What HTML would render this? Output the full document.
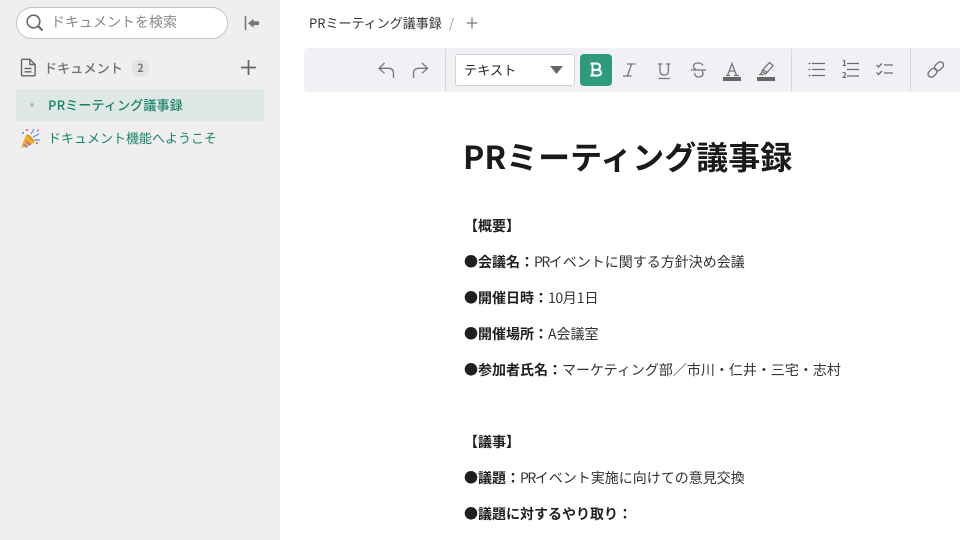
<!DOCTYPE html>
<html lang="ja"><head><meta charset="utf-8"><style>
*{box-sizing:border-box}
html,body{margin:0;padding:0}
body{width:960px;height:540px;overflow:hidden;background:#fff;position:relative;font-family:"Noto Sans CJK JP","Liberation Sans",sans-serif;color:#1f1f1f}
.a{position:absolute;white-space:nowrap}
svg{position:absolute;overflow:visible}
.p{left:464px;font-size:14px;line-height:20px;color:#333}
.p b{font-weight:700;color:#1f1f1f}
.n{letter-spacing:-1.5px}
</style></head><body>
<div class="a" style="left:0;top:0;width:280px;height:540px;background:#efefef;border-left:2px solid #e8f0ec"></div>
<div class="a" style="left:16px;top:7px;width:212px;height:32px;background:#fff;border:1px solid #c4c4c4;border-radius:16px"></div>
<svg style="left:25px;top:13px" width="20" height="20" fill="none" stroke="#666" stroke-width="1.6"><circle cx="8.5" cy="8.5" r="6.3"/><path d="M13 13l4.5 4.5" stroke-width="2"/></svg>
<div class="a" style="left:51px;top:12px;font-size:14px;line-height:20px;color:#8a8a8a">ドキュメントを検索</div>
<svg style="left:244px;top:16px" width="16" height="15"><path d="M1.500 0v14" stroke="#777" stroke-width="1.600"/><path d="M4 7.200l5.500-4.500v2.600H15v3.800H9.500v2.600z" fill="#777"/></svg>
<svg style="left:20px;top:58px" width="18" height="20" fill="none" stroke="#666" stroke-width="1.400"><path d="M1.500 2.200q0-.9.900-.9h7.400l5.300 5.200v10.400q0 .9-.9.900H2.400q-.9 0-.9-.9zM9.800 1.300v5.200h5.300M4.500 10.500h7M4.500 13.800h7"/></svg>
<div class="a" style="left:44px;top:58px;font-size:13px;line-height:20px;font-weight:500;color:#6f6f6f;letter-spacing:.15px">ドキュメント</div>
<div class="a" style="left:132px;top:60px;width:17px;height:17px;border-radius:9px;background:#e3e3e3;color:#777;font-size:11px;font-weight:700;line-height:17px;text-align:center">2</div>
<svg style="left:241px;top:60px" width="15" height="15"><path d="M7.500 0v15M0 7.500h15" stroke="#666" stroke-width="1.700"/></svg>
<div class="a" style="left:16px;top:89px;width:248px;height:32px;background:#dfe8e4;border-radius:3px"></div>
<div class="a" style="left:30px;top:103px;width:4px;height:4px;border-radius:2px;background:#bdbdbd"></div>
<div class="a" style="left:48px;top:95px;font-size:13px;line-height:20px;font-weight:500;color:#16846b;letter-spacing:.15px">PRミーティング議事録</div>
<svg style="left:20px;top:128px" width="21" height="21"><path d="M1 20L6 7l8 8z" fill="#f1b51c"/><path d="M2.800 15.500l5.500 3.200-2.500 1zM4.500 11l6.800 5.800-2.500 1z" fill="#a35bd0"/><path d="M6 7l8 8c1-1-.5-4-2.700-6.200S7 6 6 7z" fill="#e5932b"/><path d="M11 6l3-5M13 9l6-3M14 12l6 0" stroke="#5a8fe0" stroke-width="1.200"/><circle cx="7" cy="2" r="1" fill="#d9534f"/><circle cx="18" cy="2.500" r="1" fill="#d95fa0"/><circle cx="17" cy="15" r="1" fill="#d9534f"/><circle cx="3" cy="5" r="1" fill="#5a8fe0"/></svg>
<div class="a" style="left:48px;top:128px;font-size:13px;line-height:20px;color:#16846b">ドキュメント機能へようこそ</div>

<div class="a" style="left:309px;top:13px;font-size:13px;line-height:19px;color:#333">PRミーティング議事録</div>
<div class="a" style="left:449px;top:13px;font-size:13px;line-height:19px;color:#999">/</div>
<svg style="left:466px;top:17px" width="12" height="12"><path d="M6 .500v11M.500 6h11" stroke="#777" stroke-width="1.200"/></svg>

<div class="a" style="left:304px;top:48px;width:656px;height:44px;background:#f0f0f5;border-radius:4px 0 0 4px"></div>
<div class="a" style="left:445px;top:49px;width:1px;height:42px;background:#d5d5d8"></div>
<div class="a" style="left:791px;top:49px;width:1px;height:42px;background:#d5d5d8"></div>
<div class="a" style="left:910px;top:49px;width:1px;height:42px;background:#d5d5d8"></div>
<svg style="left:378px;top:62px" width="17" height="16" fill="none" stroke="#777" stroke-width="1.300"><path d="M6.500 1L1 6.300l5.500 5M1 6.300h9.500q5 0 5 5V16"/></svg>
<svg style="left:412px;top:62px" width="17" height="16" fill="none" stroke="#777" stroke-width="1.300"><path d="M10 1l5.500 5.300-5.500 5M15.500 6.300H7q-5.500 0-5.500 5V16"/></svg>
<div class="a" style="left:455px;top:54px;width:120px;height:32px;background:#fff;border:1px solid #d2d2d2;border-radius:3px"></div>
<div class="a" style="left:464px;top:60px;font-size:13px;line-height:20px;color:#222;letter-spacing:.2px">テキスト</div>
<svg style="left:550px;top:66px" width="13" height="8"><path d="M0 0h13L6.500 8z" fill="#666"/></svg>
<div class="a" style="left:580px;top:54px;width:32px;height:32px;background:#2e9b7d;border-radius:4px"></div>
<svg style="left:0;top:0" width="960" height="100" fill="none" stroke="#777" stroke-width="1.300">
<path d="M590.500 63.500h5.500q4 0 4 3.200t-4 3.200h-3.500M592.500 63.500v12M590.500 75.500h6.500q4 0 4-2.800t-4-2.800" stroke="#fff" stroke-width="2"/>
<path d="M627 64h8.500M631.500 64l-4 12M623 76h8.500"/>
<path d="M658 64h4.500M666 64h4.500M660 64v7q0 4 4.200 4t4.200-4v-7M658.500 78.500h11.500"/>
<path d="M703 65.500Q701.500 63 698 63q-4.500 0-4.500 3.500 0 2 2.500 3M694.500 73q.5 4 4 4 4.500 0 4.500-3.500 0-1.500-1-2.500M691 70h15"/>
<path d="M726 75.500h4M734 75.500h5M727.500 75.500L732 63.500l4.500 12M729 71h6"/>
<path d="M763 69.500L769.500 62.500l3.500 3-6 7zM763 69.500l4 3-1.500 1.500-3.500-3zM762 72l-2 2.500h4"/>
<path d="M812 63.500h13M812 69.500h13M812 75.500h13M808.500 63.500h2M808.500 69.500h2M808.500 75.500h2" stroke="#6b6b6b"/>
<path d="M847 63.500h12M847 69.500h12M847 76h12" stroke="#6b6b6b"/>
<path d="M876.500 65l2 2 3.500-3.500M876.500 72.500l2 2 3.500-3.500M884 65h9M884 73h9" stroke="#6b6b6b"/>
<g stroke="#6f6f6f" stroke-width="1.300"><rect x="927.500" y="69.500" width="10" height="6.500" rx="3.200" transform="rotate(-45 932.500 72.700)"/><rect x="934" y="63" width="10" height="6.500" rx="3.200" transform="rotate(-45 939 66.200)"/></g>
</svg>
<div class="a" style="left:723px;top:77px;width:18px;height:3.500px;background:#666"></div>
<div class="a" style="left:757px;top:77px;width:18px;height:3.500px;background:#666"></div>
<div class="a" style="left:842px;top:59px;font-size:8px;line-height:9px;font-weight:700;color:#666">1</div>
<div class="a" style="left:842px;top:71px;font-size:8px;line-height:9px;font-weight:700;color:#666">2</div>

<div class="a" style="left:463px;top:134px;font-size:32px;line-height:44px;font-weight:700;color:#1a1a1a">PRミーティング議事録</div>
<div class="a p" style="top:216px;left:464px"><b>【概要】</b></div>
<div class="a p" style="top:252px"><b>●会議名：</b><span class="n">PR</span>イベントに関する方針決め会議</div>
<div class="a p" style="top:288px"><b>●開催日時：</b><span style="letter-spacing:-.4px">10</span>月1日</div>
<div class="a p" style="top:324px"><b>●開催場所：</b>A会議室</div>
<div class="a p" style="top:360px"><b>●参加者氏名：</b>マーケティング部／市川・仁井・三宅・志村</div>
<div class="a p" style="top:432px"><b>【議事】</b></div>
<div class="a p" style="top:468px"><b>●議題：</b><span class="n">PR</span>イベント実施に向けての意見交換</div>
<div class="a p" style="top:504px"><b>●議題に対するやり取り：</b></div>
</body></html>
